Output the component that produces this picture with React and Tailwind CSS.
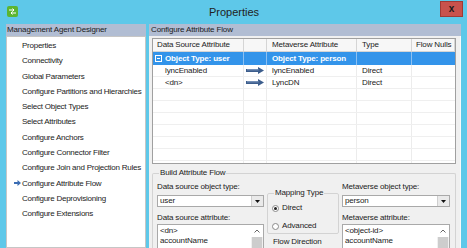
import React from 'react';

const steps = [
  'Properties',
  'Connectivity',
  'Global Parameters',
  'Configure Partitions and Hierarchies',
  'Select Object Types',
  'Select Attributes',
  'Configure Anchors',
  'Configure Connector Filter',
  'Configure Join and Projection Rules',
  'Configure Attribute Flow',
  'Configure Deprovisioning',
  'Configure Extensions',
];

const cols = 'grid grid-cols-[91px_23px_90px_55px_1fr]';

const FlowArrow = () => (
  <svg width="18" height="7" viewBox="0 0 18 7">
    <path d="M0 2h12V0l6 3.5L12 7V5H0z" fill="#3c5d8c" />
    <path d="M1 2.8h11.5" stroke="#9fb6d6" strokeWidth="0.8" />
  </svg>
);

const StepArrow = () => (
  <svg width="7" height="6" viewBox="0 0 7 6">
    <path d="M0 2h3.5V0L7 3 3.5 6V4H0z" fill="#3b6db3" />
  </svg>
);

const Dropdown = ({ value }) => (
  <div className="mt-[3px] h-[12px] bg-white border border-[#a9a9a9] flex">
    <div className="flex-1 pl-[2px] leading-[10px]">{value}</div>
    <div className="w-[12px] border-l border-[#cfcfcf] bg-[#eaeaea] flex items-center justify-center">
      <svg width="5" height="3" viewBox="0 0 5 3">
        <path d="M0 0h5L2.5 3z" fill="#111" />
      </svg>
    </div>
  </div>
);

const ListBox = ({ items }) => (
  <div className="mt-[2px] h-[30px] bg-white border border-[#a9a9a9] border-b-0 flex overflow-hidden">
    <div className="flex-1 pl-[2px] pt-[1px] leading-[10px]">
      {items.map((t) => (
        <div key={t}>{t}</div>
      ))}
    </div>
    <div className="w-[12px] bg-[#f0f0f0] flex flex-col">
      <div className="h-[12px] bg-white flex items-center justify-center">
        <svg width="6" height="4" viewBox="0 0 6 4">
          <path d="M0.5 3.5L3 1l2.5 2.5" fill="none" stroke="#555" strokeWidth="0.9" />
        </svg>
      </div>
      <div className="flex-1 mx-[1px] bg-[#cdcdcd]" />
    </div>
  </div>
);

const Radio = ({ checked, label }) => (
  <div className="h-[12px] flex items-center gap-[3px]">
    <div className="w-[7px] h-[7px] rounded-full border border-[#8a8a8a] bg-white flex items-center justify-center">
      {checked && <div className="w-[3px] h-[3px] rounded-full bg-[#222]" />}
    </div>
    <span className="leading-[10px]">{label}</span>
  </div>
);

export default function App() {
  const rows = [
    { src: 'lyncEnabled', mv: 'lyncEnabled', type: 'Direct' },
    { src: '<dn>', mv: 'LyncDN', type: 'Direct' },
  ];
  const empties = Array.from({ length: 7 });

  return (
    <div className="w-[467px] h-[248px] overflow-hidden bg-[#5ec8e9] flex flex-col font-['Liberation_Sans',Arial,sans-serif] text-[8px] tracking-[-0.15px] text-[#1b1b1b]">
      {/* title bar */}
      <div className="h-[24px] shrink-0 flex items-start pl-[7px] pr-[4px]">
        <div className="mt-[6px] w-[11px] h-[11px] rounded-[2px] bg-[#5cb531] flex items-center justify-center">
          <svg width="7" height="7" viewBox="0 0 7 7">
            <path d="M0 2h5M3.5 0.5L5 2 3.5 3.5M7 5H2M3.5 3.5L2 5l1.5 1.5" fill="none" stroke="#fff" strokeWidth="1" />
          </svg>
        </div>
        <div className="flex-1 pl-[10px] mt-[5px] text-center text-[11px] tracking-normal leading-[14px] text-[#222]">Properties</div>
        <div className="mt-[1px] w-[23px] h-[16px] bg-[#c9524c] border border-[#9f3a35] flex items-center justify-center text-[10px] font-bold text-[#1a1a1a] leading-none">
          x
        </div>
      </div>

      {/* body */}
      <div className="flex-1 flex pl-[6px] pr-[6px] gap-[3px] min-h-0">
        {/* left nav */}
        <div className="w-[140px] flex flex-col">
          <div className="h-[12px] bg-[#b1bdd3] pl-[1px] leading-[12px]">Management Agent Designer</div>
          <div className="flex-1 bg-white border border-[#c6c6c6] pt-[1px]">
            {steps.map((s) => (
              <div key={s} className="h-[15.3px] leading-[15.3px] flex items-center">
                <div className="w-[15px] flex justify-end pr-[1px]">
                  {s === 'Configure Attribute Flow' && <StepArrow />}
                </div>
                <span className="whitespace-nowrap tracking-[-0.25px]">{s}</span>
              </div>
            ))}
          </div>
        </div>

        {/* right content */}
        <div className="flex-1 flex flex-col">
          <div className="h-[12px] bg-[#b1bdd3] pl-[2px] leading-[12px]">Configure Attribute Flow</div>
          <div className="flex-1 bg-[#f0f0f0] border-r border-[#fafafa] pl-[3px] pr-[4px] pt-[2px] flex flex-col">
            {/* table */}
            <div className="h-[126px] bg-white border border-[#a0a0a0] overflow-hidden">
              <div className={`${cols} h-[13px] bg-[#f7f7f7] border-b border-[#d5d5d5] leading-[12px]`}>
                <div className="pl-[4px] border-r border-[#d5d5d5]">Data Source Attribute</div>
                <div className="border-r border-[#d5d5d5]" />
                <div className="pl-[5px] border-r border-[#d5d5d5]">Metaverse Attribute</div>
                <div className="pl-[5px] border-r border-[#d5d5d5]">Type</div>
                <div className="pl-[4px] border-r border-[#d5d5d5]">Flow Nulls</div>
              </div>
              <div className={`${cols} h-[13px] bg-[#3394ea] text-white font-bold leading-[13px]`}>
                <div className="pl-[2px] flex items-center gap-[3px] border-r border-[#8cc0f2]">
                  <div className="w-[7px] h-[7px] border border-white flex items-center justify-center">
                    <div className="w-[3px] h-px bg-white" />
                  </div>
                  <span>Object Type: user</span>
                </div>
                <div className="border-r border-[#8cc0f2]" />
                <div className="pl-[5px] border-r border-[#8cc0f2]">Object Type: person</div>
                <div className="border-r border-[#8cc0f2]" />
                <div />
              </div>
              {rows.map((r) => (
                <div key={r.src} className={`${cols} h-[12px] border-b border-[#efefef] leading-[11px]`}>
                  <div className="pl-[12px] border-r border-[#ececec]">{r.src}</div>
                  <div className="border-r border-[#ececec] flex items-center justify-center">
                    <FlowArrow />
                  </div>
                  <div className="pl-[5px] border-r border-[#ececec]">{r.mv}</div>
                  <div className="pl-[5px] border-r border-[#ececec]">{r.type}</div>
                  <div />
                </div>
              ))}
              {empties.map((_, i) => (
                <div key={i} className={`${cols} h-[12px] border-b border-[#efefef]`}>
                  <div className="border-r border-[#ececec]" />
                  <div className="border-r border-[#ececec]" />
                  <div className="border-r border-[#ececec]" />
                  <div className="border-r border-[#ececec]" />
                  <div />
                </div>
              ))}
            </div>

            {/* build attribute flow */}
            <fieldset className="mt-[4px] flex-1 border border-[#d3d3d3] border-b-0 rounded-t-[2px] pl-[4px] pr-[5px]">
              <legend className="ml-[2px] px-[1px] leading-[10px]">Build Attribute Flow</legend>
              <div className="flex gap-[3px] pt-[4px]">
                <div className="w-[107px]">
                  <div className="leading-[10px]">Data source object type:</div>
                  <Dropdown value="user" />
                  <div className="mt-[6px] leading-[9px]">Data source attribute:</div>
                  <ListBox items={['<dn>', 'accountName']} />
                </div>
                <div className="w-[72px]">
                  <fieldset className="mt-[6px] border border-[#d3d3d3] rounded-[2px] pl-[4px] pt-[4px] pb-[1px]">
                    <legend className="ml-[2px] px-[1px] leading-[10px]">Mapping Type</legend>
                    <Radio checked label="Direct" />
                    <div className="mt-[6px]">
                      <Radio label="Advanced" />
                    </div>
                  </fieldset>
                  <div className="mt-[3px] pl-[6px] leading-[10px]">Flow Direction</div>
                </div>
                <div className="flex-1">
                  <div className="leading-[10px]">Metaverse object type:</div>
                  <Dropdown value="person" />
                  <div className="mt-[6px] leading-[9px]">Metaverse attribute:</div>
                  <ListBox items={['<object-id>', 'accountName']} />
                </div>
              </div>
            </fieldset>
          </div>
        </div>
      </div>
    </div>
  );
}
